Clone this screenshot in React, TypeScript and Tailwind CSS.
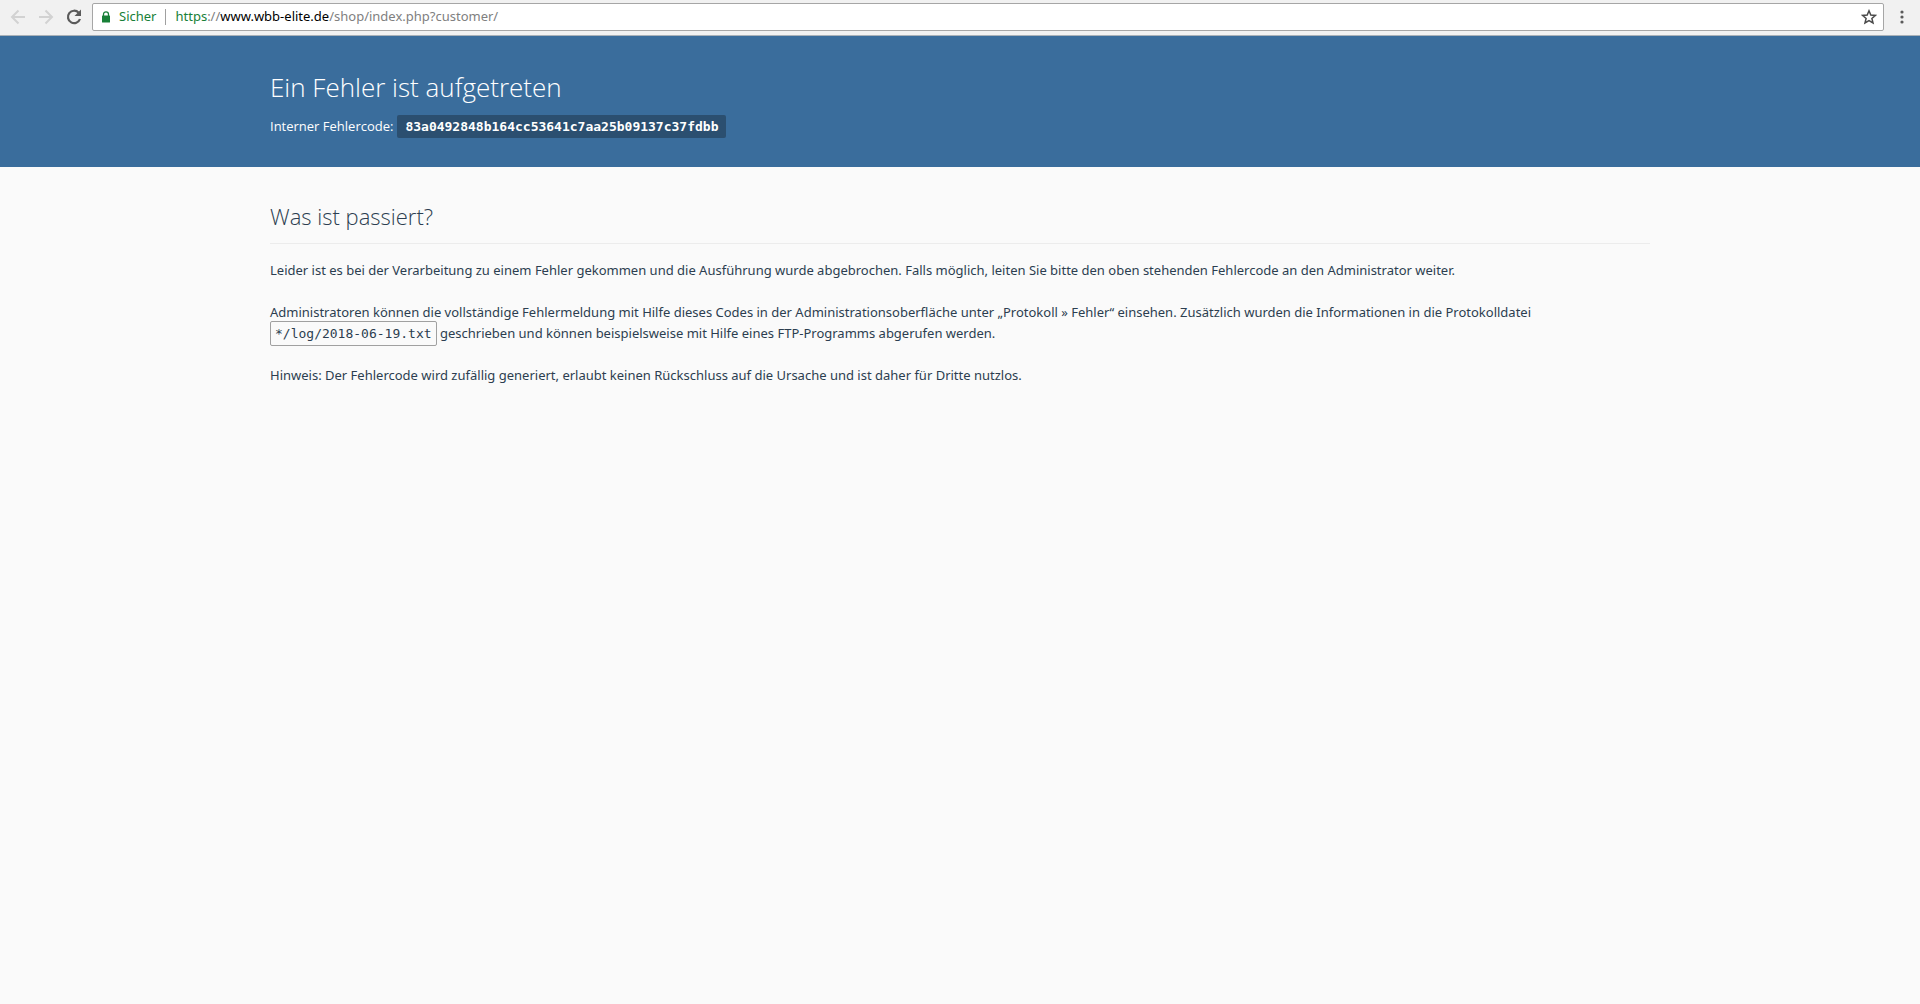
import { useState } from "react";

const errorCode = "83a0492848b164cc53641c7aa25b09137c37fdbb";
const logFile = "*/log/2018-06-19.txt";

function BrowserBar() {
  const [path, setPath] = useState("/shop/index.php?customer/");

  return (
    <div className="flex items-center h-9 pl-1 pr-2 pb-px bg-[#f1f1f1] border-b border-[#a9b1b8] text-[13px] font-['Noto_Sans',sans-serif]">
      <button aria-label="Zurück" disabled className="w-7 flex justify-center text-[#d2d2d2]">
        <svg width="16" height="16" viewBox="0 0 16 16" fill="none" stroke="currentColor" strokeWidth="2">
          <path d="M15 8H2.5M8.5 1.5L2 8l6.500 6.500" />
        </svg>
      </button>
      <button aria-label="Vor" disabled className="w-7 flex justify-center text-[#d2d2d2]">
        <svg width="16" height="16" viewBox="0 0 16 16" fill="none" stroke="currentColor" strokeWidth="2">
          <path d="M1 8h12.500M7.500 1.500L14 8l-6.500 6.500" />
        </svg>
      </button>
      <button aria-label="Neu laden" className="w-7 flex justify-center text-[#5a5a5a]">
        <svg width="16" height="16" viewBox="0 0 16 16">
          <path d="M12.700 3.700A6.200 6.200 0 1 0 14 10" fill="none" stroke="currentColor" strokeWidth="2.200" />
          <path d="M15 0.500V7H8.500z" fill="currentColor" />
        </svg>
      </button>
      <div className="flex-1 flex items-center h-7 ml-1 mr-2 pl-2 pr-1 bg-white border border-[#a6a6a6] rounded-xs">
        <button className="flex items-center gap-2 text-[#188038]">
          <svg width="10" height="12" viewBox="0 0 10 12">
            <path d="M2.500 5.500V3.300a2.500 2.500 0 0 1 5 0v2.200" fill="none" stroke="currentColor" strokeWidth="1.300" />
            <rect x="1" y="4.500" width="8" height="7" rx="0.600" fill="currentColor" />
          </svg>
          <span>Sicher</span>
        </button>
        <span className="w-px h-4 mx-[9px] bg-[#a0a0a0]" />
        <label htmlFor="address" className="whitespace-nowrap text-black">
          <span className="text-[#188038]">https</span>
          <span className="text-[#808080]">://</span>www.wbb-elite.de
        </label>
        <input
          id="address"
          type="text"
          value={path}
          onChange={(e) => setPath(e.target.value)}
          className="flex-1 min-w-0 text-[#808080] outline-none"
        />
        <button aria-label="Lesezeichen" className="w-5 flex justify-center text-[#4a4a4a]">
          <svg width="16" height="16" viewBox="0 0 16 16">
            <path
              d="M8 1.800l1.800 4.200 4.600.4-3.500 3 1.100 4.500L8 11.500l-4 2.400 1.100-4.500-3.500-3 4.600-.4z"
              fill="none"
              stroke="currentColor"
              strokeWidth="1.500"
            />
          </svg>
        </button>
      </div>
      <button aria-label="Menü" className="w-5 flex justify-center text-[#5a5a5a]">
        <svg width="4" height="14" viewBox="0 0 4 14" fill="currentColor">
          <circle cx="2" cy="2" r="1.600" />
          <circle cx="2" cy="7" r="1.600" />
          <circle cx="2" cy="12" r="1.600" />
        </svg>
      </button>
    </div>
  );
}

export default function App() {
  return (
    <div className="min-h-screen bg-[#fafafa] text-[#2c3e50] font-['Open_Sans',sans-serif]">
      <BrowserBar />

      <header className="bg-[#3a6d9c] text-white pt-7 pb-[29px]">
        <div className="max-w-[1400px] mx-auto px-[10px]">
          <h1 className="mb-[5px] text-[26px] leading-[46px] font-light">Ein Fehler ist aufgetreten</h1>
          <p className="flex items-center gap-1 text-[13px]">
            Interner Fehlercode:
            <code className="px-2 h-[23px] leading-[23px] rounded-xs bg-[#2b4f70] font-['DejaVu_Sans_Mono',monospace] font-bold">
              {errorCode}
            </code>
          </p>
        </div>
      </header>

      <main className="max-w-[1400px] mx-auto px-[10px] pt-8">
        <h2 className="pb-[10px] mb-4 border-b border-[#ececec] text-[22px] leading-[34px] font-light">
          Was ist passiert?
        </h2>
        <div className="flex flex-col gap-[21px] text-[13px] leading-[21px] font-['Noto_Sans',sans-serif]">
          <p>
            Leider ist es bei der Verarbeitung zu einem Fehler gekommen und die Ausführung wurde abgebrochen. Falls
            möglich, leiten Sie bitte den oben stehenden Fehlercode an den Administrator weiter.
          </p>
          <p>
            Administratoren können die vollständige Fehlermeldung mit Hilfe dieses Codes in der
            Administrationsoberfläche unter „Protokoll » Fehler“ einsehen. Zusätzlich wurden die Informationen in die
            Protokolldatei{" "}
            <code className="px-1 py-1 whitespace-nowrap rounded-xs border border-[#a0a0a0] font-['DejaVu_Sans_Mono',monospace]">
              {logFile}
            </code>{" "}
            geschrieben und können beispielsweise mit Hilfe eines FTP-Programms abgerufen werden.
          </p>
          <p>
            Hinweis: Der Fehlercode wird zufällig generiert, erlaubt keinen Rückschluss auf die Ursache und ist daher
            für Dritte nutzlos.
          </p>
        </div>
      </main>
    </div>
  );
}
